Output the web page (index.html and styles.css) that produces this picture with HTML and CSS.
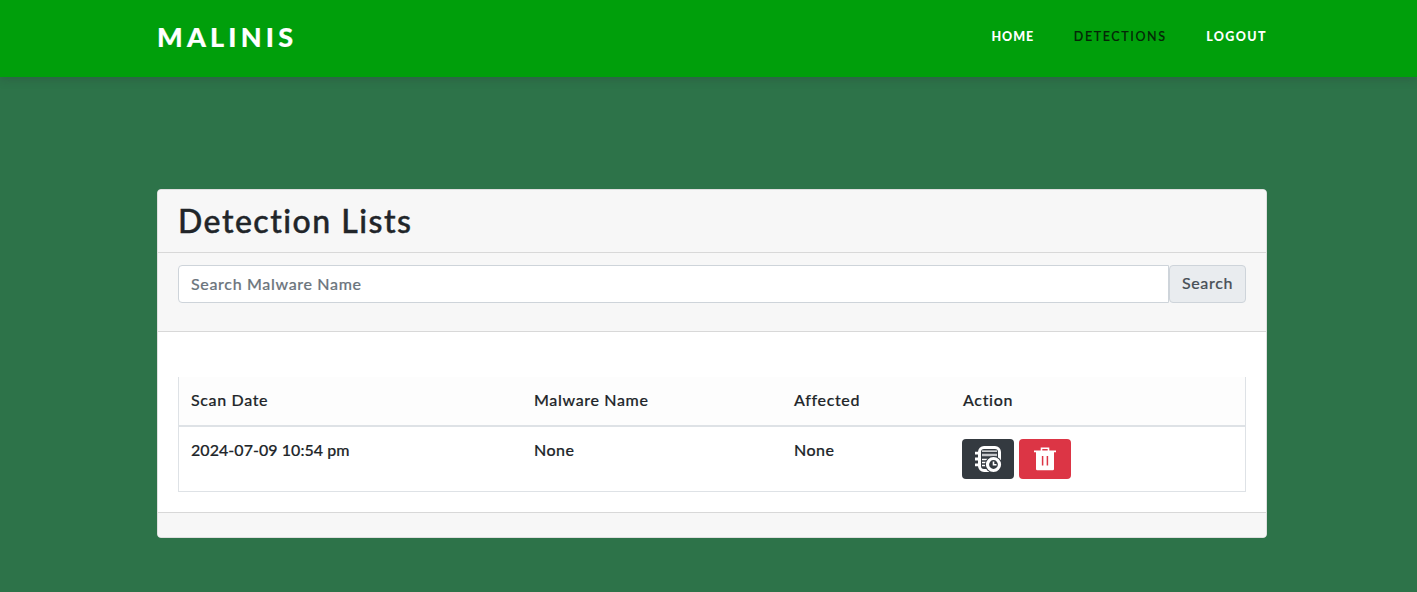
FILE: index.html
```html
<!DOCTYPE html>
<html lang="en">
<head>
<meta charset="utf-8">
<title>Malinis - Detections</title>
<link rel="stylesheet" href="styles.css">
</head>
<body>
<header class="navbar">
  <div class="container navbar-inner">
    <a class="brand">MALINIS</a>
    <nav class="nav">
      <a class="nav-link nav-home">HOME</a>
      <a class="nav-link active">DETECTIONS</a>
      <a class="nav-link nav-logout">LOGOUT</a>
    </nav>
  </div>
</header>
<main class="container">
  <section class="card">
    <div class="card-header"><h2 class="title">Detection Lists</h2></div>
    <div class="card-search">
      <input class="search-input" type="text" placeholder="Search Malware Name">
      <button class="search-button">Search</button>
    </div>
    <div class="card-body">
      <table class="table">
        <thead>
          <tr><th class="col-date">Scan Date</th><th class="col-name">Malware Name</th><th class="col-affected">Affected</th><th class="col-action">Action</th></tr>
        </thead>
        <tbody>
          <tr>
            <td class="date">2024-07-09 10:54 pm</td>
            <td>None</td>
            <td>None</td>
            <td class="action-cell">
              <div class="actions">
                <button class="btn btn-dark" aria-label="View log">
                  <svg width="28" height="28" viewBox="0 0 28 28" fill="none">
                    <rect x="5.5" y="2.5" width="20" height="23" rx="4.5" stroke="#fff" stroke-width="3"/>
                    <path d="M1 8.2h5M1 14h5M1 19.8h5" stroke="#fff" stroke-width="2.8"/>
                    <path d="M8 6.2h15M8 14.5h8M8 17.5h5M8 20.5h4" stroke="#fff" stroke-width="1.3"/>
                    <path d="M8 10h15" stroke="#c5c7ca" stroke-width="2.5"/>
                    <circle cx="19.5" cy="19.5" r="8.6" fill="#343a40"/>
                    <circle cx="19.5" cy="19.5" r="6" stroke="#fff" stroke-width="3.2"/>
                    <path d="M19.5 16.5v3.3H22.5" stroke="#fff" stroke-width="1.6"/>
                  </svg>
                </button>
                <button class="btn btn-danger" aria-label="Delete">
                  <svg width="28" height="28" viewBox="0 0 28 28" fill="none">
                    <path d="M10.5 6V3.2h7V6" stroke="#fff" stroke-width="1.6"/>
                    <path d="M3 5.6h22v1.6h-2V24q0 1.2-1.2 1.2H6.2Q5 25.2 5 24V7.2H3z" fill="#fff"/>
                    <path d="M11.6 11v9.5M16.4 11v9.5" stroke="#dc3545" stroke-width="1.5"/>
                  </svg>
                </button>
              </div>
            </td>
          </tr>
        </tbody>
      </table>
    </div>
    <div class="card-footer"></div>
  </section>
</main>
</body>
</html>
```
FILE: styles.css
```css
* { box-sizing: border-box; }
body {
  margin: 0;
  background: #2d7349;
  color: #212529;
  font: 500 16px/24px Lato, "Open Sans", sans-serif;
  -webkit-text-stroke-width: .18px;
}
.container { width: 1110px; margin-left: 157px; }
.navbar {
  height: 77px;
  background: #009f0b;
  box-shadow: 0 3px 8px rgba(45, 60, 55, .25);
}
.navbar-inner { display: flex; align-items: center; justify-content: space-between; height: 73px; }
.brand { color: #fff; font-size: 27px; font-weight: 900; letter-spacing: 4.2px; }
.nav { display: flex; gap: 39.5px; }
.nav-link { color: #fff; font-size: 12.5px; font-weight: 900; letter-spacing: 1.4px; -webkit-text-stroke-width: 0; }
.nav-home { letter-spacing: 1px; }
.nav-link.active { color: #052507; font-weight: 500; letter-spacing: 1.6px; -webkit-text-stroke-width: .15px; }
.card {
  height: 349px;
  margin-top: 112px;
  border: 1px solid #dfdfdf;
  border-radius: 4px;
  background: #fff;
  overflow: hidden;
}
.card-header { height: 63px; padding: 12px 20px; border-bottom: 1px solid #d8d8d8; background: #f7f7f7; }
.title { margin: 0; font-size: 32px; font-weight: 500; line-height: 38px; letter-spacing: 1.5px; -webkit-text-stroke-width: .45px; }
.card-search { display: flex; height: 79px; padding: 12px 20px 28px; border-bottom: 1px solid #d8d8d8; background: #f7f7f7; }
.search-input {
  flex: 1;
  height: 38px;
  padding: 5px 12px 7px;
  border: 1px solid #ced4da;
  border-radius: 4px 0 0 4px;
  font: inherit;
  letter-spacing: .66px;
}
.search-input::placeholder { color: #6c757d; opacity: 1; }
.search-button {
  width: 77px;
  height: 38px;
  padding: 0 0 2px;
  border: 1px solid #ced4da;
  border-radius: 4px;
  background: #e9ecef;
  color: #495057;
  font: inherit;
  letter-spacing: .65px;
}
.card-body { height: 181px; padding: 45px 20px 20px; border-bottom: 1px solid #d8d8d8; }
.table {
  width: 1068px;
  height: 115px;
  table-layout: fixed;
  border: 1px solid #dee2e6;
  border-top: 0;
  border-spacing: 0;
}
.table th, .table td { padding: 11px 12px 13px; text-align: left; vertical-align: top; font-weight: 500; letter-spacing: .65px; }
.table th { height: 50px; border-bottom: 2px solid #dee2e6; background: #fdfdfd; }
.table td { height: 64px; letter-spacing: .5px; }
.table .date { letter-spacing: .05px; }
.table .action-cell { padding: 12px; }
.col-date { width: 343px; }
.col-name { width: 260px; }
.col-affected { width: 169px; }
.actions { display: flex; gap: 5px; margin-left: -1px; }
.btn { display: grid; place-items: center; width: 52px; height: 40px; padding: 0; border: 0; border-radius: 4px; }
.btn-dark { background: #343a40; }
.btn-danger { background: #dc3545; }
.card-footer { height: 24px; background: #f7f7f7; }
```
